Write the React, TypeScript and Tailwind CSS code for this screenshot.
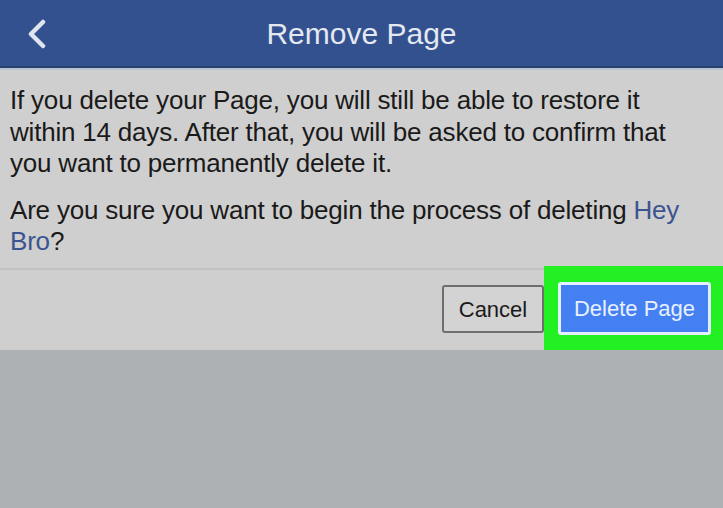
import React from "react";

export default function App() {
  return (
    <div className="w-[723px] h-[508px] bg-[#adb1b3] overflow-hidden" style={{ fontFamily: '"Liberation Sans", Arial, sans-serif' }}>
      <div className="h-[68px] bg-[#33518f] flex items-center relative border-b-2 border-[#26406f]">
        <svg className="absolute left-[26px] top-[19px]" width="22" height="30" viewBox="0 0 22 30">
          <path d="M17 3 L5 15 L17 27" fill="none" stroke="#dfe4ee" strokeWidth="4.5" strokeLinecap="round" strokeLinejoin="round" />
        </svg>
        <div className="w-full text-center text-[30px] text-[#e3e8f1] tracking-[0px]">Remove Page</div>
      </div>
      <div className="h-[2px] bg-[#b9c3d3]" />
      <div className="bg-[#cfcfcf] h-[280px] flex flex-col">
        <div className="px-[10px] pt-[15px] text-[26px] leading-[31.5px] text-[#1a1a1a] tracking-[-0.2px] h-[200px] whitespace-nowrap">
          <p>
            If you delete your Page, you will still be able to restore it
            <br />
            within 14 days. After that, you will be asked to confirm that
            <br />
            you want to permanently delete it.
          </p>
          <p className="mt-[15px]">
            Are you sure you want to begin the process of deleting <span className="text-[#3b5590]">Hey</span>
            <br />
            <span className="text-[#3b5590]">Bro</span>?
          </p>
        </div>
        <div className="h-[2px] bg-[#c2c2c2]" />
        <div className="flex-1 flex justify-end items-start">
          <div className="mt-[15px] w-[102px] h-[48px] border-2 border-[#6e6e6e] rounded-[3px] bg-[#d3d3d3] flex items-center justify-center text-[22px] text-[#1a1a1a]">Cancel</div>
          <div className="mt-[-4px] w-[179px] h-[84px] bg-[#22f022] flex items-start pl-[14px] pt-[16px]">
            <div className="w-[153px] h-[53px] bg-[#4480f2] border-[3px] border-[#e6efff] rounded-[3px] flex items-center justify-center text-[22px] text-[#e9f0ff]">Delete Page</div>
          </div>
        </div>
      </div>
    </div>
  );
}
